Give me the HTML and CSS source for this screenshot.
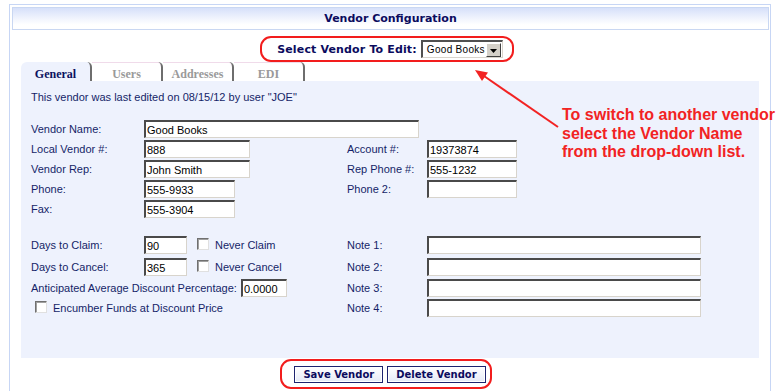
FILE: index.html
```html
<!DOCTYPE html>
<html lang="en">
<head>
  <meta charset="UTF-8">
  <title>Vendor Configuration</title>
  <link rel="stylesheet" href="styles.css">
</head>
<body>
  <div class="page">
    <!-- Header -->
    <div class="title-bar">Vendor Configuration</div>

    <!-- Vendor picker -->
    <div class="picker-row">
      <div class="callout picker">
        <span class="picker-label">Select Vendor To Edit:</span>
        <div class="select">
          <span class="select-value">Good Books</span>
          <span class="select-btn">
            <svg width="7" height="4" viewBox="0 0 7 4"><polygon points="0,0 7,0 3.5,4" fill="#000"/></svg>
          </span>
        </div>
      </div>
    </div>

    <!-- Tabs -->
    <div class="tabs">
      <div class="tab active">General</div>
      <div class="tab">Users</div>
      <div class="tab">Addresses</div>
      <div class="tab">EDI</div>
    </div>

    <!-- General tab panel -->
    <div class="panel">
      <p class="edited">This vendor was last edited on 08/15/12 by user "JOE"</p>

      <div class="form-grid top-grid">
        <label>Vendor Name:</label>
        <div class="span-3"><input class="field w-name" type="text" value="Good Books"></div>

        <label>Local Vendor #:</label>
        <div><input class="field w-md" type="text" value="888"></div>
        <label>Account #:</label>
        <div><input class="field w-acct" type="text" value="19373874"></div>

        <label>Vendor Rep:</label>
        <div><input class="field w-md" type="text" value="John Smith"></div>
        <label>Rep Phone #:</label>
        <div><input class="field w-acct" type="text" value="555-1232"></div>

        <label>Phone:</label>
        <div><input class="field w-sm" type="text" value="555-9933"></div>
        <label>Phone 2:</label>
        <div><input class="field w-acct" type="text" value=""></div>

        <label>Fax:</label>
        <div><input class="field w-sm" type="text" value="555-3904"></div>
      </div>

      <div class="form-grid lower-grid">
        <label>Days to Claim:</label>
        <div class="inline">
          <input class="field w-days" type="text" value="90">
          <span class="check-wrap"><span class="check"></span>Never Claim</span>
        </div>
        <label>Note 1:</label>
        <div><input class="field w-note" type="text" value=""></div>

        <label>Days to Cancel:</label>
        <div class="inline">
          <input class="field w-days" type="text" value="365">
          <span class="check-wrap"><span class="check"></span>Never Cancel</span>
        </div>
        <label>Note 2:</label>
        <div><input class="field w-note" type="text" value=""></div>

        <div class="span-2 inline pct">
          <label>Anticipated Average Discount Percentage:</label>
          <input class="field w-pct" type="text" value="0.0000">
        </div>
        <label>Note 3:</label>
        <div><input class="field w-note" type="text" value=""></div>

        <div class="span-2 encumber">
          <span class="check-wrap"><span class="check"></span>Encumber Funds at Discount Price</span>
        </div>
        <label>Note 4:</label>
        <div><input class="field w-note" type="text" value=""></div>
      </div>
    </div>

    <!-- Actions -->
    <div class="actions-row">
      <div class="callout actions">
        <button class="btn">Save Vendor</button>
        <button class="btn">Delete Vendor</button>
      </div>
    </div>
  </div>

  <!-- Annotation -->
  <svg class="arrow" width="781" height="391" viewBox="0 0 781 391">
    <line x1="558" y1="127" x2="484" y2="76" stroke="#f22323" stroke-width="2"/>
    <polygon points="475,70 488,72.5 482,81" fill="#f22323"/>
  </svg>
  <div class="note">To switch to another vendor<br>select the Vendor Name<br>from the drop-down list.</div>
</body>
</html>
```

FILE: styles.css
```css
/* General Reset */
* {
  margin: 0;
  padding: 0;
  box-sizing: border-box;
}

html, body {
  overflow: hidden;
}

body {
  font-family: "Liberation Sans", Arial, sans-serif;
  font-size: 11px;
  color: #151f68;
  background-color: #FFFFFF;
  height: 391px;
}

/* Outer frame */
.page {
  margin: 4px 0 0 9px;
  width: 762px;
  height: 387px;
  border: 1px solid #c7d6f5;
  border-bottom: none;
}

.title-bar {
  margin: 2px 1px 0 2px;
  height: 23px;
  border: 1px solid #c9d7f2;
  background: linear-gradient(#d6e0fa 0%, #eef2fd 45%, #ffffff 80%);
  font-family: "DejaVu Sans", Verdana, sans-serif;
  font-weight: bold;
  font-size: 11px;
  line-height: 21px;
  text-align: center;
  color: #0b0b5e;
}

/* Red annotation outlines */
.callout {
  border: 2px solid #f21d1d;
  border-radius: 11px;
  display: flex;
  align-items: center;
}

/* Vendor picker */
.picker-row {
  margin-top: 6px;
  display: flex;
  justify-content: center;
  padding-right: 6px;
}

.picker {
  height: 26px;
  padding: 0 9px 0 15px;
  gap: 4px;
}

.picker-label {
  font-family: "DejaVu Sans", Verdana, sans-serif;
  font-weight: bold;
  font-size: 11px;
  letter-spacing: 0.15px;
  color: #0b0b5e;
}

.select {
  width: 82px;
  height: 18px;
  display: flex;
  align-items: center;
  background-color: #FFFFFF;
  border-style: solid;
  border-width: 2px 1px 1px 2px;
  border-color: #505050 #d8d4cc #d8d4cc #505050;
}

.select-value {
  flex: 1;
  padding-left: 4px;
  font-size: 10px;
  letter-spacing: 0.3px;
  color: #000000;
}

.select-btn {
  width: 15px;
  height: 14px;
  margin-right: 1px;
  background-color: #d4d0c8;
  border-style: solid;
  border-width: 1px;
  border-color: #ffffff #404040 #404040 #ffffff;
  display: flex;
  align-items: flex-end;
  justify-content: center;
  padding-bottom: 3px;
}

/* Tabs */
.tabs {
  margin-left: 11px;
  display: flex;
  height: 19px;
}

.tab {
  width: 71px;
  height: 19px;
  padding-top: 6px;
  line-height: 13px;
  text-align: center;
  font-family: "Liberation Serif", "Times New Roman", serif;
  font-weight: bold;
  font-size: 12px;
  color: #9a9a9a;
  background-color: #FFFFFF;
  border-right: 2px solid #6e6e6e;
  border-top-right-radius: 5px;
  box-shadow: inset 0 1px 0 #f0dbea;
}

.tab.active {
  color: #0b1160;
  background-color: #eef2fd;
  border-top-left-radius: 6px;
  box-shadow: none;
}

/* Panel */
.panel {
  margin: 0 11px;
  height: 277px;
  background-color: #eef2fd;
  padding: 10px 0 0 10px;
}

.edited {
  line-height: 13px;
}

.form-grid {
  display: grid;
  grid-template-columns: 113px 203px 80px 1fr;
  align-items: center;
}

.top-grid {
  margin-top: 15px;
  grid-auto-rows: 20px;
}

.lower-grid {
  margin-top: 15px;
  grid-template-rows: 22px 22px 20px 20px;
}

.span-2 {
  grid-column: span 2;
}

.span-3 {
  grid-column: span 3;
}

.inline {
  display: flex;
  align-items: center;
}

.pct {
  gap: 4px;
}

.encumber {
  padding-left: 4px;
}

/* Inputs */
.field {
  display: block;
  height: 18px;
  padding: 0 1px;
  font-family: "Liberation Sans", Arial, sans-serif;
  font-size: 11px;
  color: #000000;
  background-color: #FFFFFF;
  border-style: solid;
  border-width: 2px 1px 1px 2px;
  border-color: #4a4a4a #d8d4cc #d8d4cc #4a4a4a;
  outline: none;
}

.w-name { width: 275px; }
.w-md { width: 106px; }
.w-sm { width: 91px; }
.w-acct { width: 90px; }
.w-days { width: 43px; }
.w-pct { width: 46px; }
.w-note { width: 274px; }

.check-wrap {
  display: flex;
  align-items: center;
  gap: 6px;
}

.inline .check-wrap {
  margin-left: 10px;
}

.check {
  width: 12px;
  height: 12px;
  margin-bottom: 3px;
  background-color: #FFFFFF;
  border-style: solid;
  border-width: 1px;
  border-color: #707070 #e0e0e0 #e0e0e0 #707070;
  box-shadow: inset 1px 1px 0 #a0a0a0;
}

/* Buttons */
.actions-row {
  margin-top: 1px;
  display: flex;
  justify-content: center;
  padding-right: 8px;
}

.actions {
  height: 30px;
  padding: 0 4px 0 12px;
  gap: 4px;
}

.btn {
  height: 17px;
  padding: 0 8px;
  font-family: "DejaVu Sans", Verdana, sans-serif;
  font-weight: bold;
  font-size: 10px;
  color: #0b0b5e;
  border: 1px solid #1d2470;
  background: linear-gradient(#ffffff, #e4e9f7);
  box-shadow: inset 0 0 0 1px #ffffff;
  cursor: pointer;
}

/* Annotation over the page */
.arrow {
  position: absolute;
  top: 0;
  left: 0;
  pointer-events: none;
}

.note {
  position: absolute;
  top: 106px;
  left: 562px;
  font-family: "Liberation Sans", Arial, sans-serif;
  font-weight: bold;
  font-size: 16px;
  line-height: 18.5px;
  color: #f22323;
  white-space: nowrap;
}
```
